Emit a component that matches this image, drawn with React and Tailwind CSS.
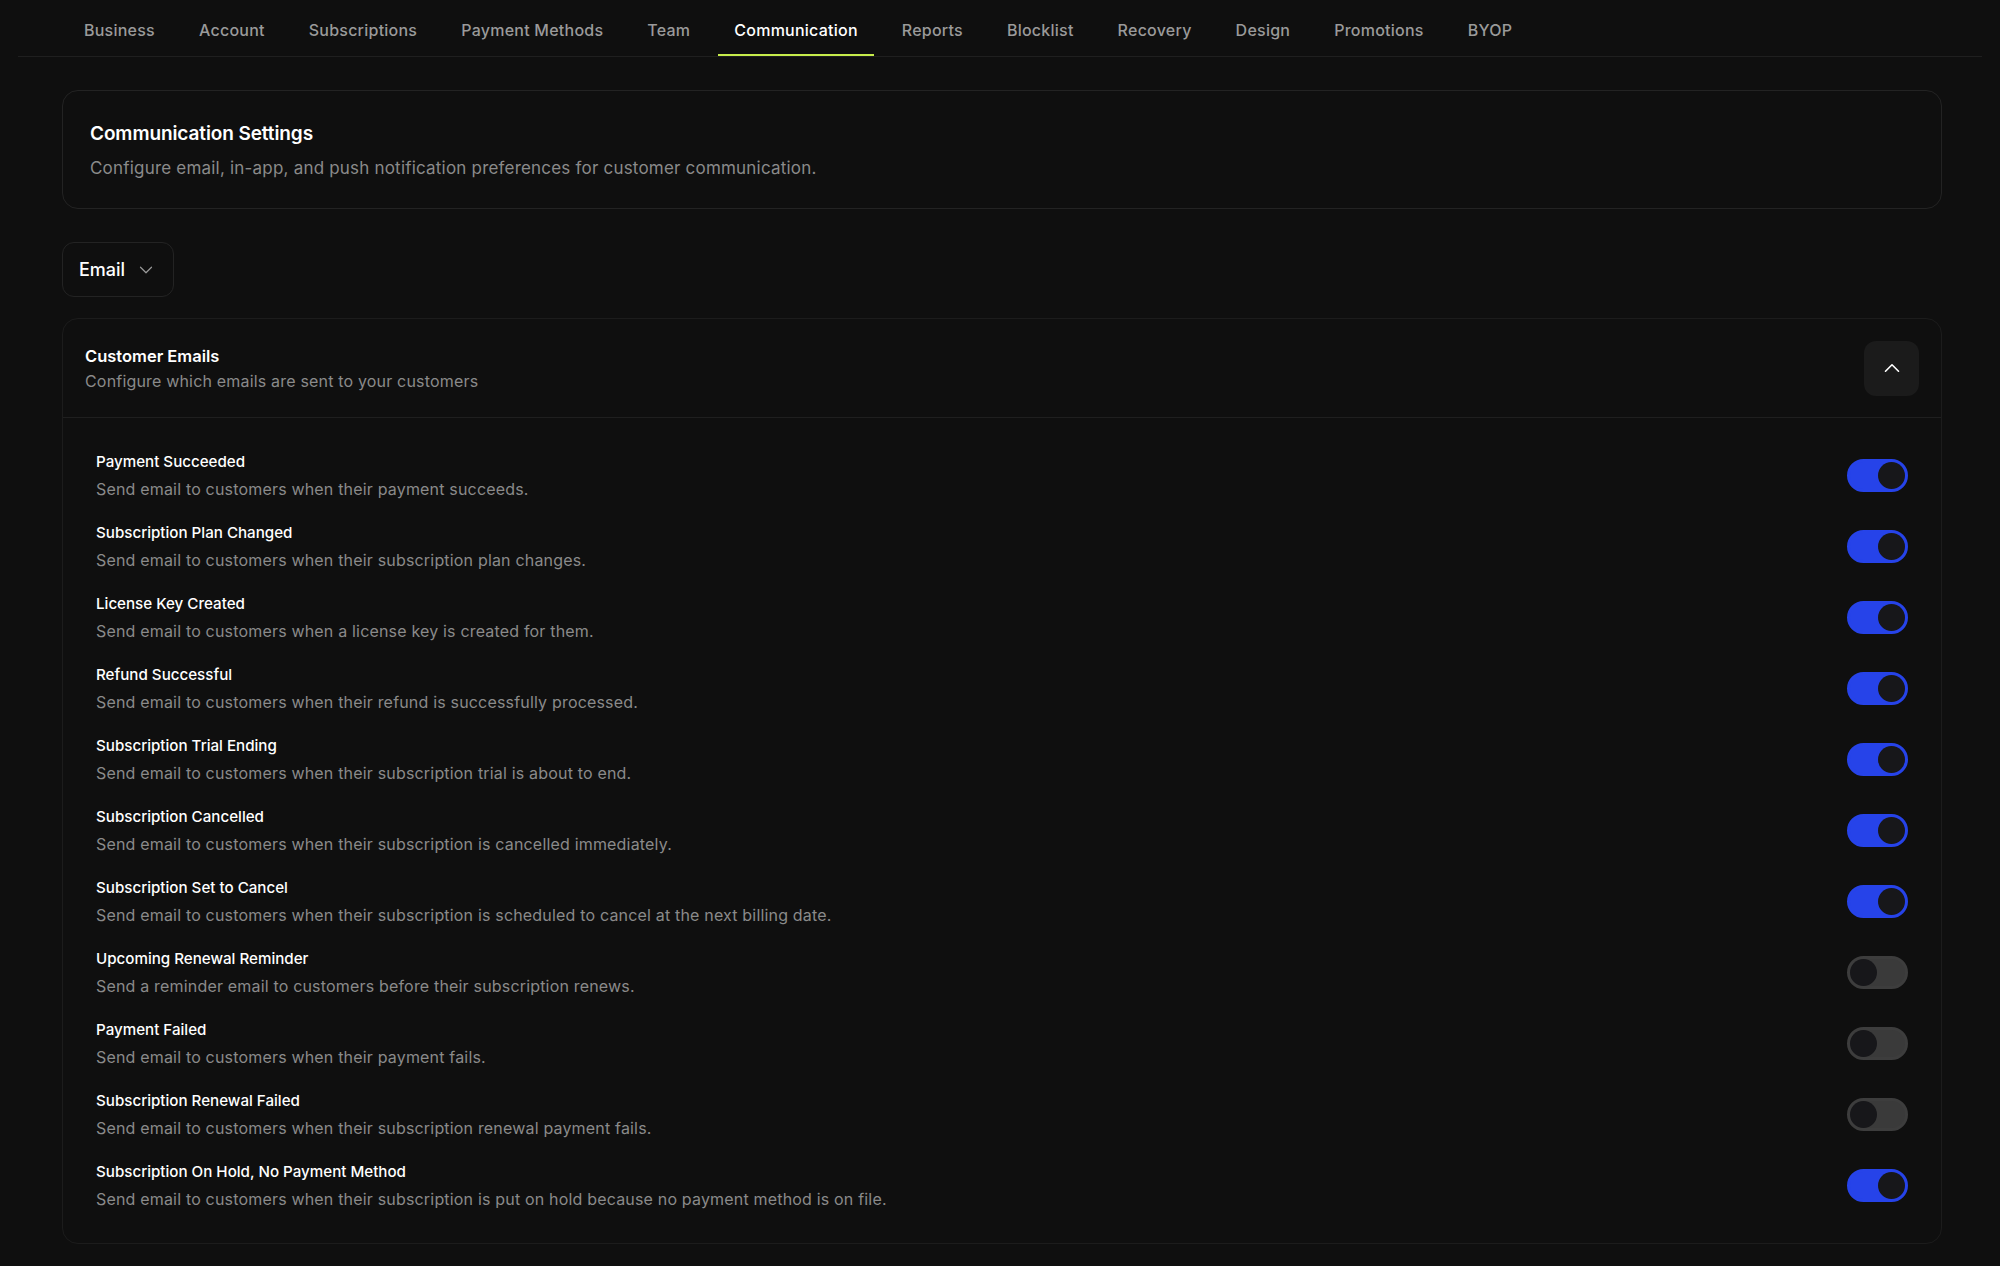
import React from "react";
import { ChevronDown, ChevronUp } from "lucide-react";

const tabs = [
  "Business",
  "Account",
  "Subscriptions",
  "Payment Methods",
  "Team",
  "Communication",
  "Reports",
  "Blocklist",
  "Recovery",
  "Design",
  "Promotions",
  "BYOP",
];

const emails = [
  { title: "Payment Succeeded", desc: "Send email to customers when their payment succeeds.", on: true },
  { title: "Subscription Plan Changed", desc: "Send email to customers when their subscription plan changes.", on: true },
  { title: "License Key Created", desc: "Send email to customers when a license key is created for them.", on: true },
  { title: "Refund Successful", desc: "Send email to customers when their refund is successfully processed.", on: true },
  { title: "Subscription Trial Ending", desc: "Send email to customers when their subscription trial is about to end.", on: true },
  { title: "Subscription Cancelled", desc: "Send email to customers when their subscription is cancelled immediately.", on: true },
  { title: "Subscription Set to Cancel", desc: "Send email to customers when their subscription is scheduled to cancel at the next billing date.", on: true },
  { title: "Upcoming Renewal Reminder", desc: "Send a reminder email to customers before their subscription renews.", on: false },
  { title: "Payment Failed", desc: "Send email to customers when their payment fails.", on: false },
  { title: "Subscription Renewal Failed", desc: "Send email to customers when their subscription renewal payment fails.", on: false },
  { title: "Subscription On Hold, No Payment Method", desc: "Send email to customers when their subscription is put on hold because no payment method is on file.", on: true },
];

const Toggle = ({ on }) => (
  <div
    className={`flex h-[33px] w-[61px] shrink-0 items-center rounded-full border-[3px] ${
      on ? "justify-end border-[#2643e9] bg-[#2643e9]" : "justify-start border-[#3d3d3d] bg-[#3a3a3a]"
    }`}
  >
    <div className="h-[27px] w-[27px] rounded-full bg-[#17171a]" />
  </div>
);

const App = () => {
  return (
    <div className="h-[1266px] overflow-hidden bg-[#0f0f0f] font-['Inter',sans-serif] text-white">
      {/* TABS */}
      <nav className="mx-[18px] flex h-[57px] gap-3 border-b border-[#1f1f1f] pl-[50px]">
        {tabs.map((t) => (
          <div
            key={t}
            className={`flex h-[56px] items-center border-b-2 px-4 pt-[6px] text-[16px] font-medium tracking-[0.24px] ${
              t === "Communication" ? "border-[#c6ec4b] text-white" : "border-transparent text-[#9a9a9a]"
            }`}
          >
            {t}
          </div>
        ))}
      </nav>

      <main className="ml-[62px] mr-[58px] mt-[33px]">
        {/* HEADER CARD */}
        <section className="flex h-[119px] flex-col justify-center rounded-2xl border border-[#232323] px-[27px] pt-[2px]">
          <h1 className="text-[19px] font-semibold leading-[28px] tracking-[-0.1px]">Communication Settings</h1>
          <p className="mt-[7px] text-[17px] leading-[26px] tracking-[0.2px] text-[#8a8a8a]">
            Configure email, in-app, and push notification preferences for customer communication.
          </p>
        </section>

        {/* CHANNEL SELECT */}
        <button className="mt-[33px] flex h-[55px] w-[112px] items-center gap-[10px] rounded-xl border border-[#232323] pl-4 text-[18px] font-medium">
          Email
          <ChevronDown size={22} strokeWidth={1.3} className="text-[#9a9a9a]" />
        </button>

        {/* CUSTOMER EMAILS */}
        <section className="mt-[21px] rounded-2xl border border-[#1c1c1c]">
          <header className="flex h-[99px] items-center justify-between border-b border-[#1f1f1f] px-[22px]">
            <div>
              <h2 className="pt-px text-[16.5px] font-semibold leading-[25px]">Customer Emails</h2>
              <p className="text-[16px] leading-[24px] tracking-[0.18px] text-[#8a8a8a]">Configure which emails are sent to your customers</p>
            </div>
            <button className="flex h-[55px] w-[55px] items-center justify-center rounded-xl bg-[#1b1b1b]">
              <ChevronUp size={26} strokeWidth={1.5} />
            </button>
          </header>
          <div className="flex flex-col gap-[15px] px-[33px] pb-[30px] pt-[29px]">
            {emails.map((e) => (
              <div key={e.title} className="flex h-[56px] items-center justify-between">
                <div className="pt-[2px]">
                  <div className="text-[15.15px] font-medium leading-[26px]">{e.title}</div>
                  <div className="text-[16px] leading-[28px] tracking-[0.18px] text-[#8a8a8a]">{e.desc}</div>
                </div>
                <Toggle on={e.on} />
              </div>
            ))}
          </div>
        </section>
      </main>
    </div>
  );
};

export default App;
